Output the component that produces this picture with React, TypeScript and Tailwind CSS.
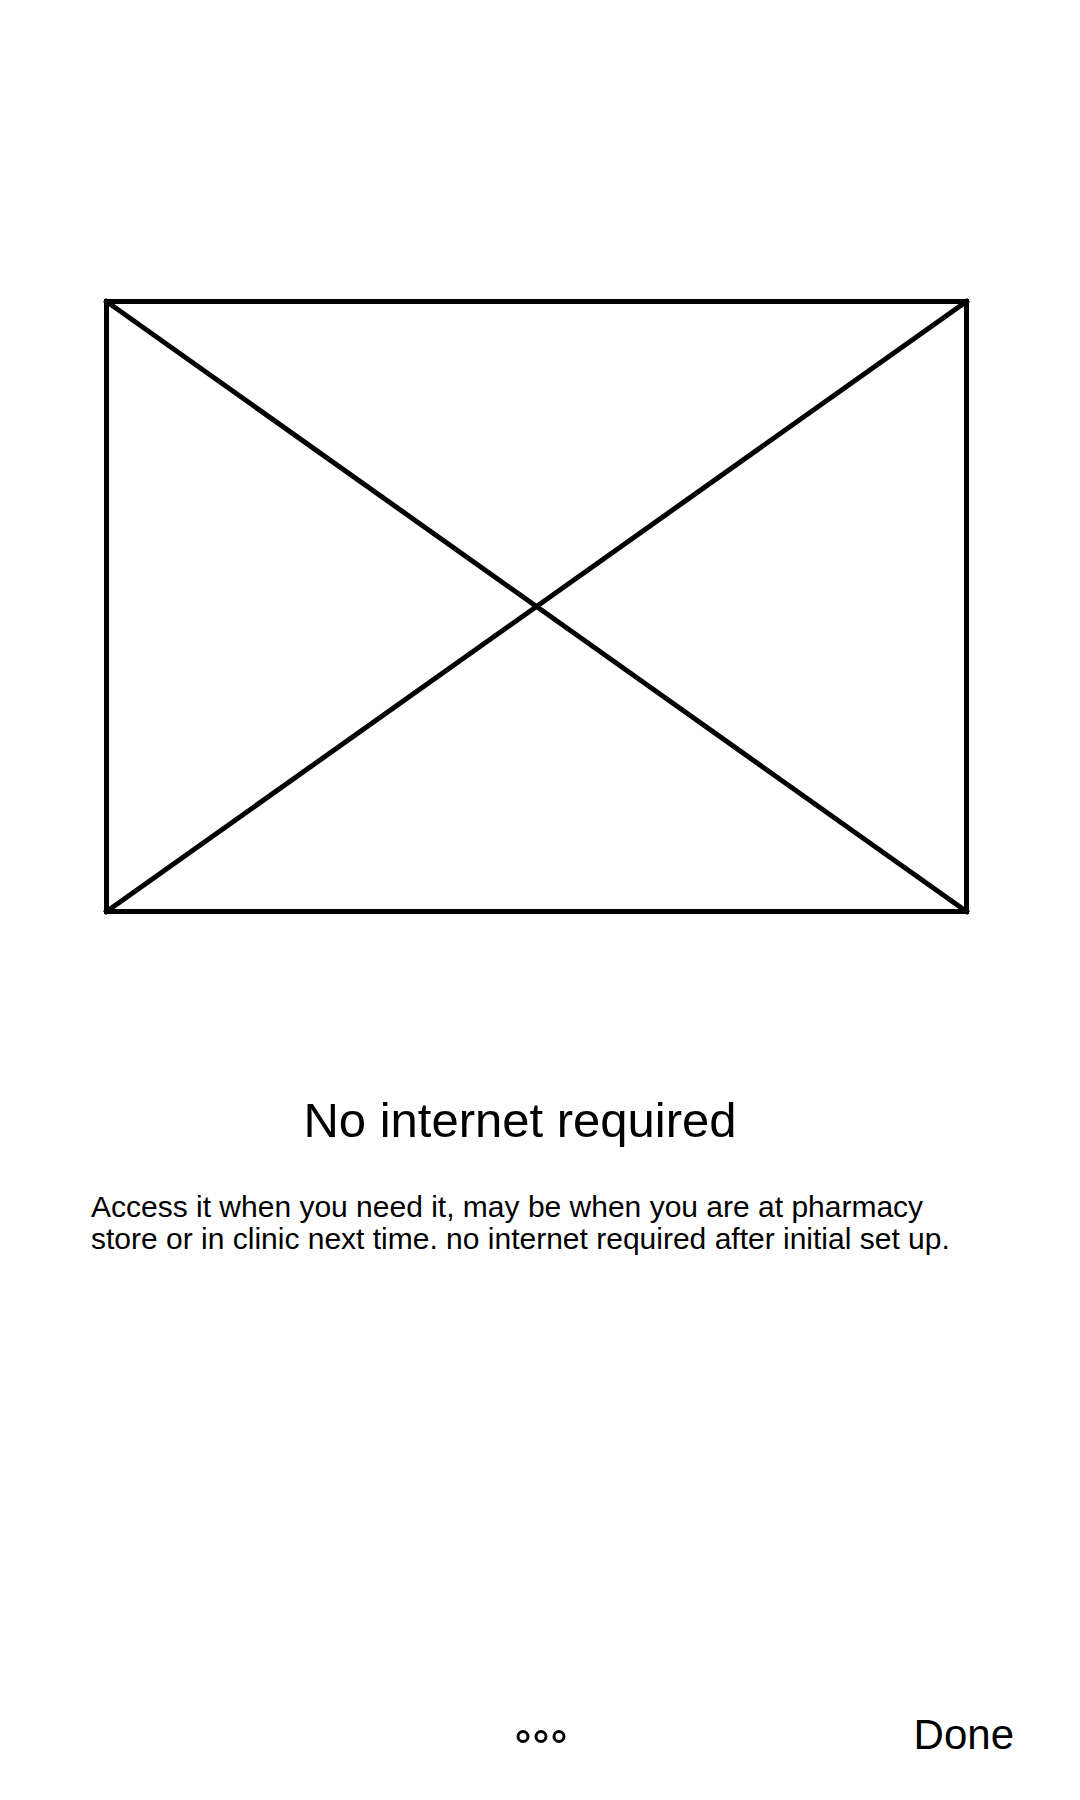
export default function App() {
  return (
    <main className="flex min-h-screen flex-col bg-white font-['Liberation_Sans',Arial,sans-serif] text-black">
      <div className="pt-[298px] pr-[108px] pl-[104px]">
        <svg
          role="img"
          aria-label="Image placeholder"
          viewBox="0 0 868 618"
          className="block h-auto w-full overflow-visible"
          fill="none"
          stroke="black"
          strokeWidth="5"
        >
          <rect x="2.5" y="3.5" width="860" height="610" />
          <path d="M2.5 3.5 862.5 613.5M862.5 3.5 2.5 613.5" strokeLinecap="square" />
        </svg>
      </div>
      <section className="mt-44 px-[91px]">
        <h1 className="pr-10 text-center text-[49px] leading-[56px]">No internet required</h1>
        <p className="mt-[43px] text-[30px] leading-8">
          Access it when you need it, may be when you are at pharmacy store or in clinic next time. no internet
          required after initial set up.
        </p>
      </section>
      <footer className="mt-auto grid grid-cols-3 items-center pr-[66px] pb-[37px] pl-[68px]">
        <svg
          role="img"
          aria-label="Onboarding pages"
          viewBox="0 0 50 16"
          className="col-start-2 h-4 w-[50px] justify-self-center"
          fill="none"
          stroke="black"
          strokeWidth="3"
        >
          <circle cx="7" cy="9.5" r="5" />
          <circle cx="25" cy="9.5" r="5" />
          <circle cx="43" cy="9.5" r="5" />
        </svg>
        <button type="button" className="justify-self-end text-[42px] leading-[56px]">
          Done
        </button>
      </footer>
    </main>
  );
}
